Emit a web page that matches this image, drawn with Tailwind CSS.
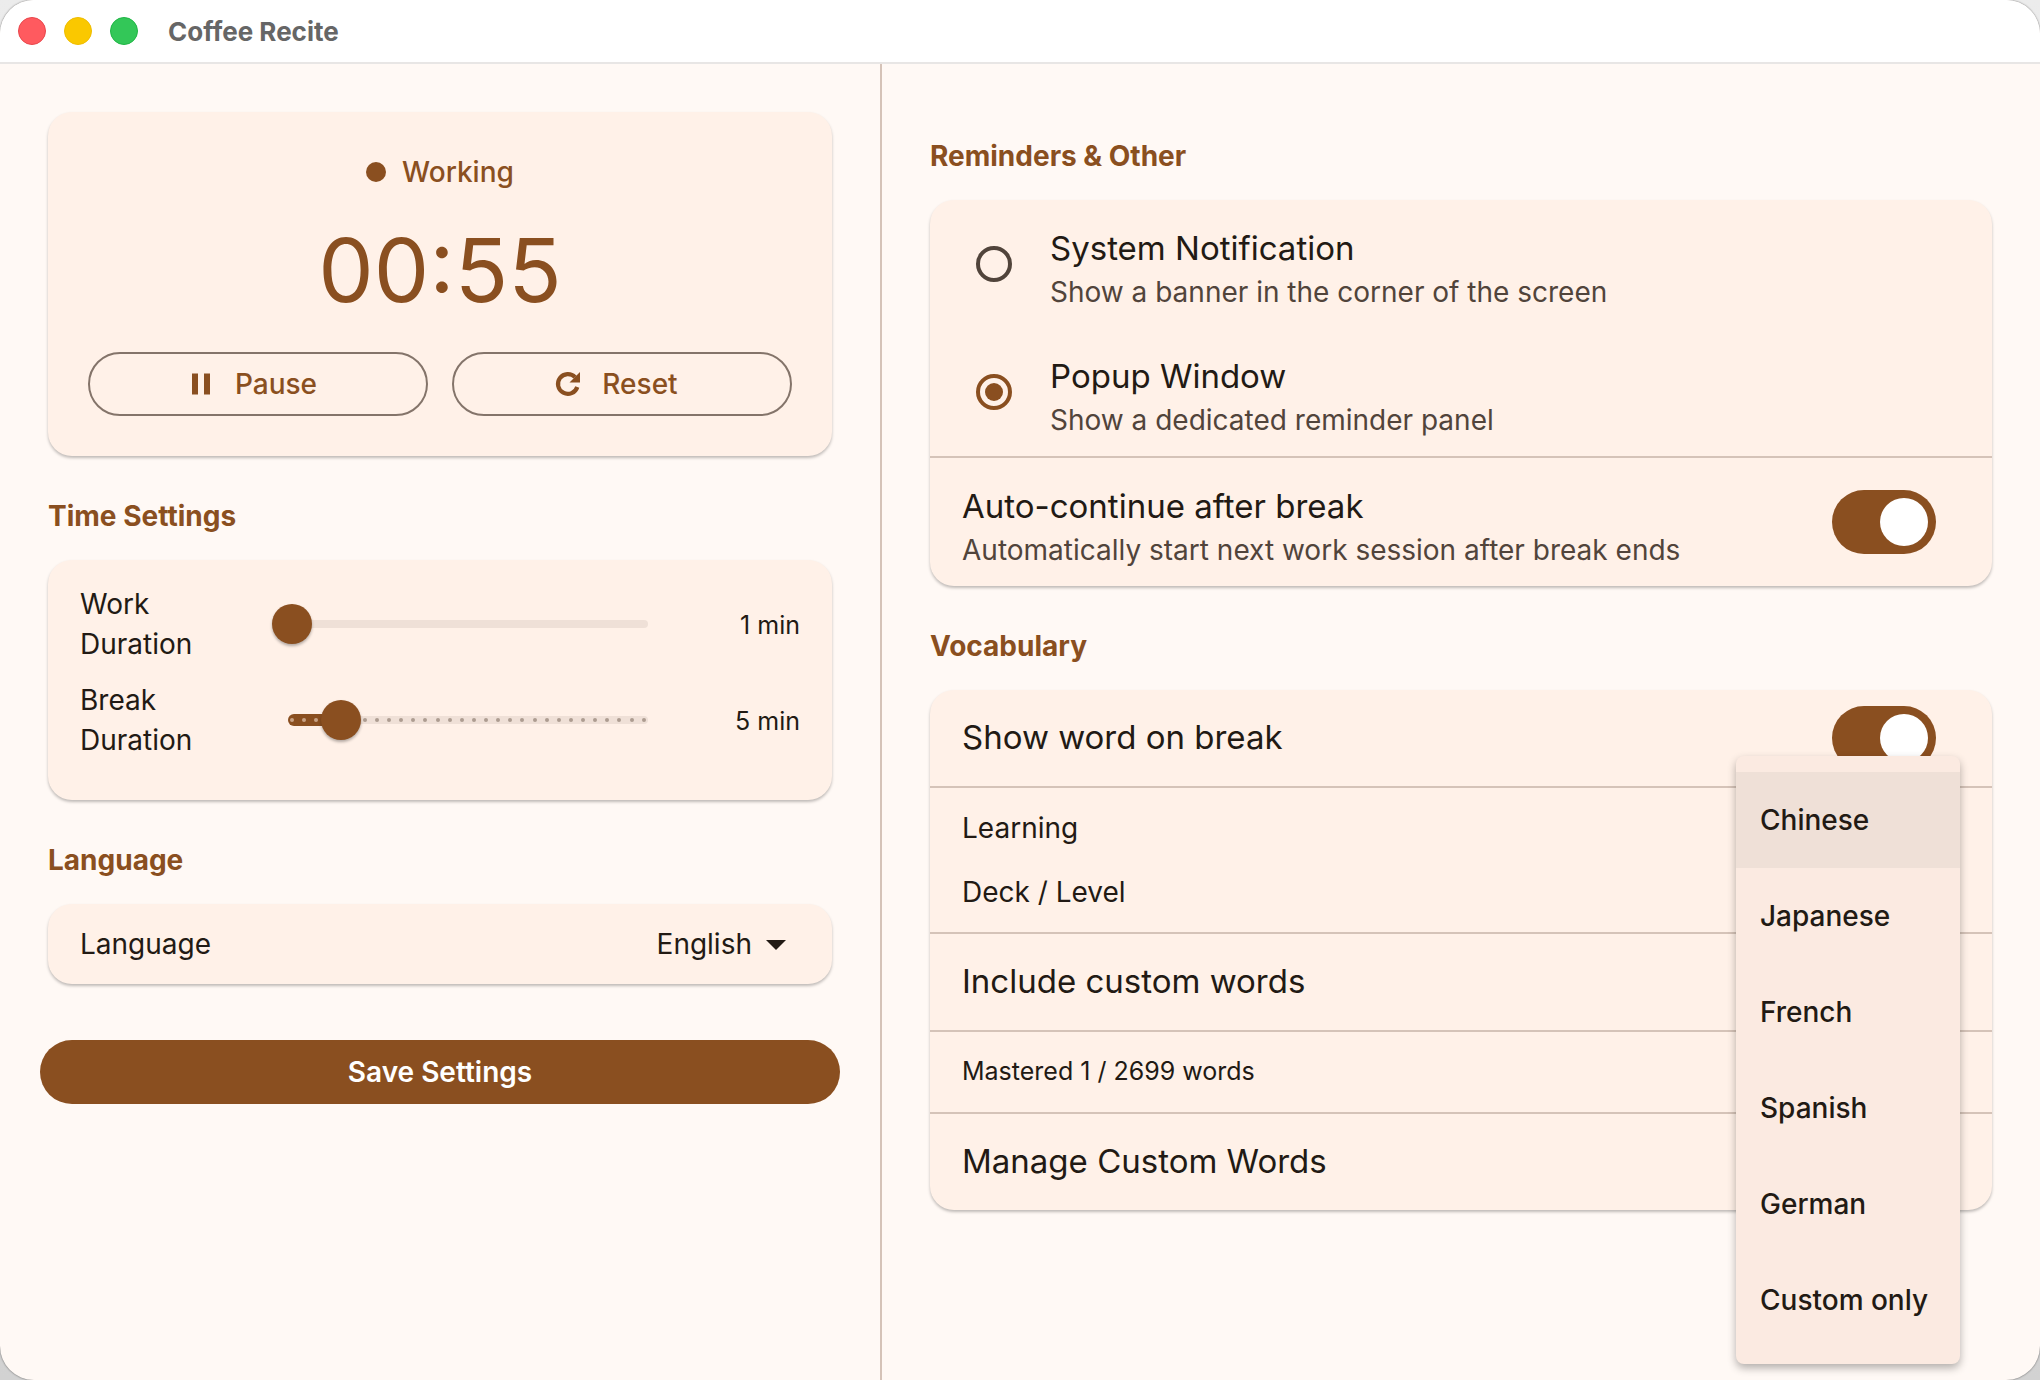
<!DOCTYPE html>
<html lang="en">
<head>
    <meta charset="UTF-8">
    <meta name="viewport" content="width=device-width, initial-scale=1.0">
    <title>Coffee Recite</title>
    <script src="https://cdn.jsdelivr.net/npm/@tailwindcss/browser@4"></script>
</head>
<body class="bg-linear-to-b from-[#ececec] to-[#d2d2d2] font-['Inter',sans-serif] text-[#221a14]">
    <div class="min-h-screen flex flex-col rounded-[34px] overflow-hidden bg-[#fff9f5] shadow-[0_0_2px_rgba(0,0,0,0.6)]">
        <!-- Title bar -->
        <header class="flex items-center h-16 pl-[18px] bg-white border-b-2 border-[#e8e6e5]">
            <div class="flex gap-[18px]">
                <button aria-label="Close" class="size-7 rounded-full bg-[#ff5a5f] border border-[#e8474c]"></button>
                <button aria-label="Minimize" class="size-7 rounded-full bg-[#fac800] border border-[#eebc00]"></button>
                <button aria-label="Zoom" class="size-7 rounded-full bg-[#33c758] border border-[#1fb545]"></button>
            </div>
            <h1 class="ml-[30px] text-[26px] font-bold text-[#666666]">Coffee Recite</h1>
        </header>

        <main class="flex-1 grid grid-cols-[147fr_193fr]">
            <!-- Left column -->
            <div class="border-r-2 border-[#d5c3b8] p-12">
                <!-- Timer -->
                <section class="rounded-3xl bg-[#fff1e8] p-10 shadow-[0_2px_3px_rgba(0,0,0,0.25)]">
                    <div class="flex items-center justify-center gap-4 text-[28px] leading-10 font-medium text-[#8a4f20]">
                        <span class="size-5 rounded-full bg-[#8a4f20]"></span>
                        <span>Working</span>
                    </div>
                    <div class="mt-5 mb-6 text-center text-[88px] leading-[116px] font-normal text-[#8a4f20]">00:55</div>
                    <div class="grid grid-cols-2 gap-6 text-[28px] font-medium text-[#8a4f20]">
                        <button class="h-16 pr-4 flex items-center justify-center gap-4 rounded-full border-2 border-[#84746a]">
                            <svg class="size-9" viewBox="0 0 24 24" fill="currentColor"><path d="M6 19h4V5H6v14zm8-14v14h4V5h-4z"/></svg>
                            Pause
                        </button>
                        <button class="h-16 pr-4 flex items-center justify-center gap-4 rounded-full border-2 border-[#84746a]">
                            <svg class="size-9" viewBox="0 0 24 24" fill="none"><path d="M18.2 14A6.6 6.6 0 1 1 16.7 7.4" stroke="currentColor" stroke-width="2.8"/><path d="M20 4v7h-7z" fill="currentColor"/></svg>
                            Reset
                        </button>
                    </div>
                </section>

                <!-- Time settings -->
                <h2 class="mt-10 mb-6 text-[28px] leading-10 font-bold text-[#8a4f20]">Time Settings</h2>
                <section class="rounded-3xl bg-[#fff1e8] px-8 pt-6 pb-10 space-y-4 shadow-[0_2px_3px_rgba(0,0,0,0.25)]">
                    <div class="flex items-center">
                        <label for="work" class="w-40 pr-8 text-[28px] leading-10">Work Duration</label>
                        <div class="relative flex-1 h-10 mx-8">
                            <div class="absolute inset-x-4 top-4 h-2 rounded-full bg-[#efe0d7]"></div>
                            <input id="work" type="range" min="1" max="120" value="1" class="absolute inset-0 w-full h-10 appearance-none bg-transparent [&::-webkit-slider-thumb]:appearance-none [&::-webkit-slider-thumb]:size-10 [&::-webkit-slider-thumb]:rounded-full [&::-webkit-slider-thumb]:bg-[#8a4f20] [&::-webkit-slider-thumb]:shadow-[0_2px_3px_rgba(0,0,0,0.3)]">
                        </div>
                        <output for="work" class="w-[104px] pt-1 text-right text-[25px]">1 min</output>
                    </div>
                    <div class="flex items-center">
                        <label for="break" class="w-40 pr-8 text-[28px] leading-10">Break Duration</label>
                        <div class="relative flex-1 h-10 mx-8">
                            <div class="absolute inset-x-4 top-4 h-2 rounded-full bg-[#efe0d7]"></div>
                            <div class="absolute left-4 top-[14px] h-3 w-12 rounded-full bg-[#8a4f20]"></div>
                            <div id="ticks" class="absolute inset-x-[18px] top-[18px] flex justify-between"></div>
                            <input id="break" type="range" min="1" max="30" value="5" class="absolute inset-0 w-full h-10 appearance-none bg-transparent [&::-webkit-slider-thumb]:appearance-none [&::-webkit-slider-thumb]:size-10 [&::-webkit-slider-thumb]:rounded-full [&::-webkit-slider-thumb]:bg-[#8a4f20] [&::-webkit-slider-thumb]:shadow-[0_2px_3px_rgba(0,0,0,0.3)]">
                        </div>
                        <output for="break" class="w-[104px] pt-1 text-right text-[25px]">5 min</output>
                    </div>
                </section>

                <!-- Language -->
                <h2 class="mt-10 mb-6 text-[28px] leading-10 font-bold text-[#8a4f20]">Language</h2>
                <section class="relative flex items-center justify-between h-20 rounded-3xl bg-[#fff1e8] px-8 text-[28px] shadow-[0_2px_3px_rgba(0,0,0,0.25)]">
                    <label for="language">Language</label>
                    <select id="language" class="appearance-none bg-transparent pr-12 text-right">
                        <option>English</option>
                    </select>
                    <svg class="absolute right-8 size-12 pointer-events-none" viewBox="0 0 24 24" fill="currentColor"><path d="M7 10l5 5 5-5z"/></svg>
                </section>

                <div class="mt-14 -mx-2">
                    <button class="w-full h-16 rounded-full bg-[#8a4f20] text-[28px] font-semibold text-white">Save Settings</button>
                </div>
            </div>

            <!-- Right column -->
            <div class="px-12 pt-[72px]">
                <!-- Reminders -->
                <h2 class="mb-6 text-[28px] leading-10 font-bold text-[#8a4f20]">Reminders &amp; Other</h2>
                <section class="rounded-3xl bg-[#fff1e8] shadow-[0_2px_3px_rgba(0,0,0,0.25)]">
                    <label class="flex items-center h-32 pl-[46px] gap-[38px]">
                        <input type="radio" name="reminder" class="appearance-none grid place-items-center size-9 rounded-full border-4 border-[#51443b] checked:border-[#8a4f20] before:size-[18px] before:rounded-full checked:before:bg-[#8a4f20]">
                        <span class="pt-2">
                            <span class="block text-[33px] leading-[48px]">System Notification</span>
                            <span class="block text-[28px] leading-10 text-[#51443b]">Show a banner in the corner of the screen</span>
                        </span>
                    </label>
                    <label class="flex items-center h-32 pl-[46px] gap-[38px]">
                        <input type="radio" name="reminder" checked class="appearance-none grid place-items-center size-9 rounded-full border-4 border-[#51443b] checked:border-[#8a4f20] before:size-[18px] before:rounded-full checked:before:bg-[#8a4f20]">
                        <span class="pt-2">
                            <span class="block text-[33px] leading-[48px]">Popup Window</span>
                            <span class="block text-[28px] leading-10 text-[#51443b]">Show a dedicated reminder panel</span>
                        </span>
                    </label>
                    <label class="flex items-center justify-between h-[130px] border-t-2 border-[#d5c3b8] pl-8 pr-14">
                        <span class="pt-2">
                            <span class="block text-[33px] leading-[48px]">Auto-continue after break</span>
                            <span class="block text-[28px] leading-10 text-[#51443b]">Automatically start next work session after break ends</span>
                        </span>
                        <input type="checkbox" checked class="appearance-none flex items-center w-[104px] h-16 p-2 rounded-full bg-[#d5c3b8] checked:bg-[#8a4f20] checked:justify-end before:size-12 before:rounded-full before:bg-white">
                    </label>
                </section>

                <!-- Vocabulary -->
                <h2 class="mt-10 mb-6 text-[28px] leading-10 font-bold text-[#8a4f20]">Vocabulary</h2>
                <section class="rounded-3xl bg-[#fff1e8] divide-y-2 divide-[#d5c3b8] shadow-[0_2px_3px_rgba(0,0,0,0.25)]">
                    <label class="flex items-center justify-between h-[98px] pl-8 pr-14 text-[33px]">
                        Show word on break
                        <input type="checkbox" checked class="appearance-none flex items-center w-[104px] h-16 p-2 rounded-full bg-[#d5c3b8] checked:bg-[#8a4f20] checked:justify-end before:size-12 before:rounded-full before:bg-white">
                    </label>
                    <div class="relative flex flex-col gap-6 px-8 py-5 text-[28px] leading-10">
                        <p id="learning">Learning</p>
                        <p>Deck / Level</p>
                        <!-- Open menu of the learning row -->
                        <div role="listbox" aria-labelledby="learning" class="absolute -top-8 right-8 z-10 flex flex-col w-56 py-4 rounded-lg bg-[#fbeae1] font-medium shadow-[0_4px_8px_rgba(0,0,0,0.3)]">
                            <button role="option" aria-selected="true" class="h-24 px-6 text-left whitespace-nowrap bg-[#efe0d7]">Chinese</button>
                            <button role="option" class="h-24 px-6 text-left whitespace-nowrap">Japanese</button>
                            <button role="option" class="h-24 px-6 text-left whitespace-nowrap">French</button>
                            <button role="option" class="h-24 px-6 text-left whitespace-nowrap">Spanish</button>
                            <button role="option" class="h-24 px-6 text-left whitespace-nowrap">German</button>
                            <button role="option" class="h-24 px-6 text-left whitespace-nowrap">Custom only</button>
                        </div>
                    </div>
                    <p class="flex items-center h-[98px] px-8 text-[33px]">Include custom words</p>
                    <p class="flex items-center h-[82px] px-8 text-[25px]">Mastered 1 / 2699 words</p>
                    <button class="flex items-center w-full h-24 px-8 text-[33px]">Manage Custom Words</button>
                </section>
            </div>
        </main>
    </div>

    <script>
        // One tick per minute on the break slider
        const ticks = document.getElementById('ticks');
        for (let minute = 1; minute <= 30; minute++) {
            const tick = document.createElement('span');
            tick.className = minute < 5 ? 'size-1 rounded-full bg-[#c9a284]' : 'size-1 rounded-full bg-[#ad9c91]';
            ticks.appendChild(tick);
        }
    </script>
</body>
</html>
